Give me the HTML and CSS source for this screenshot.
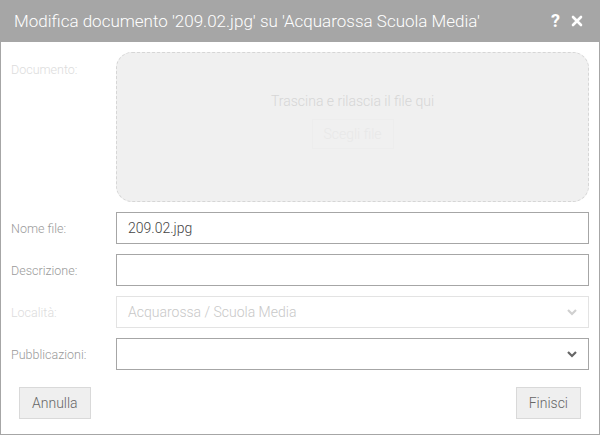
FILE: index.html
```html
<!DOCTYPE html>
<html lang="it">
<head>
<meta charset="utf-8">
<title>Modifica documento</title>
<link rel="stylesheet" href="styles.css">
</head>
<body>
<div class="dialog">
  <div class="titlebar">
    <span class="title">Modifica documento '209.02.jpg' su 'Acquarossa Scuola Media'</span>
    <span class="tools">
      <span class="tool">?</span>
      <svg class="close" width="12" height="12" viewBox="0 0 12 12"><path d="M2 2 L10 10 M10 2 L2 10" stroke="#fff" stroke-width="2.6" stroke-linecap="round"/></svg>
    </span>
  </div>
  <div class="content">
    <div class="row row-drop">
      <label class="lbl lbl-faint">Documento:</label>
      <div class="dropzone">
        <div class="drop-text">Trascina e rilascia il file qui</div>
        <div class="drop-btn">Scegli file</div>
      </div>
    </div>
    <div class="row">
      <label class="lbl">Nome file:</label>
      <div class="field">209.02.jpg</div>
    </div>
    <div class="row">
      <label class="lbl">Descrizione:</label>
      <div class="field"></div>
    </div>
    <div class="row">
      <label class="lbl lbl-faint">Località:</label>
      <div class="field field-disabled select">
        <span>Acquarossa / Scuola Media</span>
        <svg class="chev" width="12" height="8" viewBox="0 0 12 8"><path d="M2 2 L6 6 L10 2" fill="none" stroke="#d0d0d0" stroke-width="2.2"/></svg>
      </div>
    </div>
    <div class="row">
      <label class="lbl">Pubblicazioni:</label>
      <div class="field select">
        <span></span>
        <svg class="chev" width="12" height="8" viewBox="0 0 12 8"><path d="M2 2 L6 6 L10 2" fill="none" stroke="#666" stroke-width="2.2"/></svg>
      </div>
    </div>
    <div class="actions">
      <button class="btn">Annulla</button>
      <button class="btn">Finisci</button>
    </div>
  </div>
</div>
</body>
</html>
```
FILE: styles.css
```css
html, body {
  margin: 0;
  padding: 0;
  background: #fff;
}
body {
  font-family: Roboto, "Liberation Sans", sans-serif;
}
.dialog {
  width: 600px;
  height: 435px;
  box-sizing: border-box;
  border: 1px solid #a6a6a6;
  border-top: none;
  display: flex;
  flex-direction: column;
}
.titlebar {
  height: 42px;
  margin: 0 -1px;
  background: #a6a6a6;
  display: flex;
  align-items: center;
  justify-content: space-between;
  padding: 0 17px 0 14px;
  flex-shrink: 0;
}
.title {
  color: #fff;
  font-size: 17px;
  font-weight: 300;
}
.tools {
  display: flex;
  align-items: center;
  gap: 11px;
}
.tool {
  color: #fff;
  font-weight: 700;
  font-size: 18px;
  line-height: 1;
}
.close {
  display: block;
}
.content {
  padding: 10px 10px 0 10px;
  display: flex;
  flex-direction: column;
  gap: 10px;
}
.row {
  display: flex;
  align-items: center;
  height: 32px;
}
.row-drop {
  height: 150px;
  align-items: flex-start;
}
.lbl {
  width: 105px;
  flex-shrink: 0;
  font-size: 12.5px;
  font-weight: 300;
  color: #9a9a9a;
}
.lbl-faint {
  color: #dcdcdc;
}
.row-drop .lbl {
  padding-top: 10px;
}
.dropzone {
  flex: 1;
  height: 150px;
  box-sizing: border-box;
  border: 1px dashed #d6d6d6;
  border-radius: 16px;
  background: #f0f0f0;
  display: flex;
  flex-direction: column;
  align-items: center;
  padding-top: 40px;
  gap: 10px;
}
.drop-text {
  font-size: 14px;
  font-weight: 300;
  color: #d6d6d6;
}
.drop-btn {
  width: 82px;
  height: 30px;
  box-sizing: border-box;
  border: 1px solid #ededed;
  background: #f0f0f0;
  color: #e8e8e8;
  font-size: 14px;
  font-weight: 300;
  display: flex;
  align-items: center;
  justify-content: center;
}
.field {
  flex: 1;
  height: 32px;
  box-sizing: border-box;
  border: 1px solid #a6a6a6;
  padding: 0 11px;
  display: flex;
  align-items: center;
  font-size: 14px;
  font-weight: 300;
  color: #444;
}
.field-disabled {
  border-color: #e3e3e3;
  color: #c8c8c8;
}
.select {
  justify-content: space-between;
  padding-right: 10px;
}
.chev {
  display: block;
}
.actions {
  display: flex;
  justify-content: space-between;
  padding: 7px 8px 0 8px;
}
.btn {
  height: 32px;
  box-sizing: border-box;
  border: 1px solid #d9d9d9;
  background: #efefef;
  color: #666;
  font-family: Roboto, "Liberation Sans", sans-serif;
  font-size: 14px;
  font-weight: 300;
  padding: 0 12px;
  border-radius: 0;
}
```
